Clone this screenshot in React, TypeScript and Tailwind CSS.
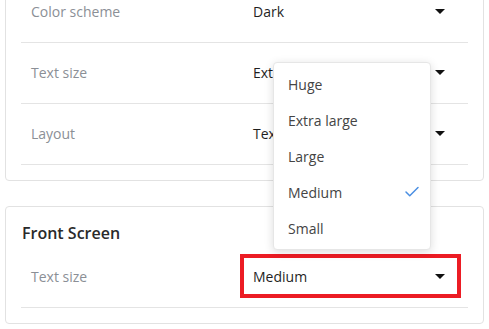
import { Check } from "lucide-react";

const Caret = () => (
  <svg width="10" height="5" viewBox="0 0 10 5" className="shrink-0">
    <path d="M0 0h10L5 5z" fill="#111" />
  </svg>
);

type RowProps = { label: string; value: string; highlight?: boolean };

const SettingRow = ({ label, value, highlight }: RowProps) => (
  <div className="flex items-center h-[61px] pl-[10px] pr-[7px] pb-[2px] border-b border-[#e4e4e4]">
    <span className="flex-1 text-[14px] text-[#8b8f96]">{label}</span>
    <div
      className={
        "w-[221px] h-[44px] flex items-center justify-between pl-[9px] pr-[12px] border-4 " +
        (highlight ? "border-[#ec1c24]" : "border-transparent")
      }
    >
      <span className="text-[14px] text-[#1f1f1f]">{value}</span>
      <Caret />
    </div>
  </div>
);

const options = ["Huge", "Extra large", "Large", "Medium", "Small"];

export default function App() {
  return (
    <div
      className="relative h-[329px] overflow-hidden bg-white px-[5px]"
      style={{ fontFamily: '"Open Sans", "Noto Sans", sans-serif' }}
    >
      <div className="-mt-[19px] border border-[#e2e2e2] rounded-[4px] px-[15px] pb-[15px]">
        <SettingRow label="Color scheme" value="Dark" />
        <SettingRow label="Text size" value="Extra large" />
        <SettingRow label="Layout" value="Text" />
      </div>

      <div className="mt-[25px] border border-[#e2e2e2] rounded-[4px] px-[15px] pb-[15px]">
        <h2 className="pt-[16px] pb-[4px] pl-[1px] text-[16px] leading-[20px] font-semibold text-[#2a2a2a]">
          Front Screen
        </h2>
        <SettingRow label="Text size" value="Medium" highlight />
      </div>

      <div className="absolute left-[273px] top-[62px] w-[158px] bg-white border border-[#e6e6e6] rounded-[4px] py-[3px] shadow-[0_2px_10px_rgba(0,0,0,0.14)]">
        {options.map((o) => (
          <div key={o} className="h-[36px] flex items-center justify-between pl-[14px] pr-[9px]">
            <span className="text-[14px] text-[#444]">{o}</span>
            {o === "Medium" && <Check size={18} strokeWidth={2} color="#4a8fe2" />}
          </div>
        ))}
      </div>
    </div>
  );
}
